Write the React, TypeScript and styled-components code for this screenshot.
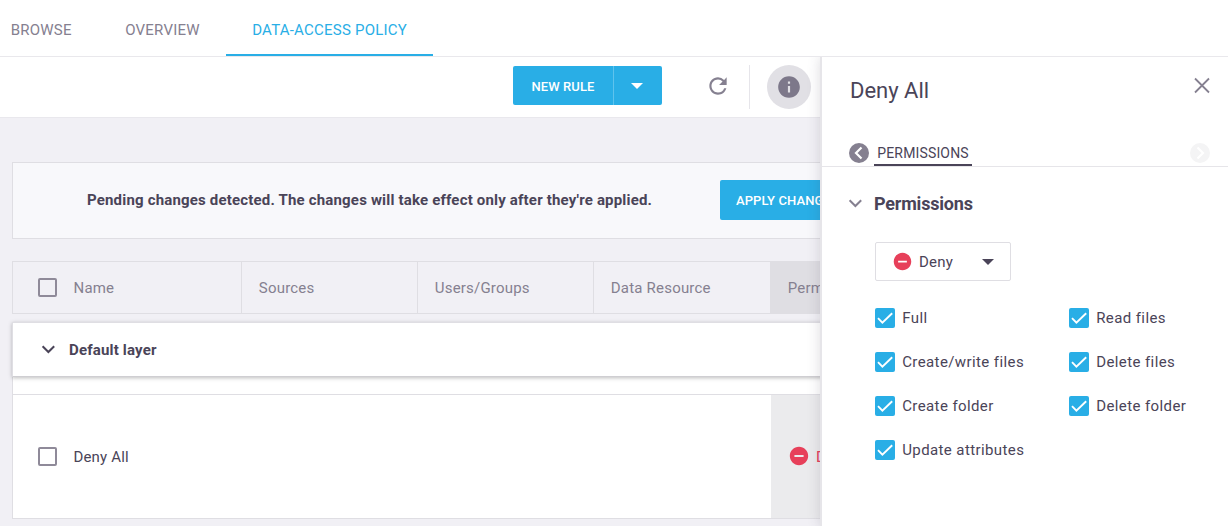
import React from "react";
import styled, { createGlobalStyle } from "styled-components";
import { MdInfo, MdRefresh, MdRemoveCircle } from "react-icons/md";

const ink = "#4a4458";
const muted = "#858090";
const blue = "#29aee6";
const red = "#e7405a";
const line = "#dfdee3";

const GlobalStyle = createGlobalStyle`
  *, *::before, *::after { box-sizing: border-box; }
  body { margin: 0; background: #fff; }
  svg { display: block; flex: none; }
  button { font: inherit; border: 0; padding: 0; background: none; color: inherit; }
`;

const Page = styled.div`
  width: 1228px;
  height: 526px;
  overflow: hidden;
  display: flex;
  flex-direction: column;
  font-family: Roboto, "Liberation Sans", sans-serif;
  font-size: 15px;
  letter-spacing: 0.4px;
  color: ${ink};
  white-space: nowrap;
`;

const NavBar = styled.nav`
  flex: none;
  height: 57px;
  display: flex;
  align-items: stretch;
  border-bottom: 1px solid #e9e8ec;
  background: #fff;
`;

const NavTab = styled.button<{ $width: number; $active?: boolean; $first?: boolean }>`
  width: ${(p) => p.$width}px;
  padding: 6px 0 0 ${(p) => (p.$first ? 10.7 : 26.2)}px;
  text-align: left;
  font-size: 15px;
  letter-spacing: 0.22px;
  color: ${(p) => (p.$active ? blue : muted)};
  border-bottom: 2px solid ${(p) => (p.$active ? blue : "transparent")};
`;

const Body = styled.div`
  flex: 1;
  min-height: 0;
  display: flex;
  overflow: hidden;
`;

const Main = styled.main`
  width: 820px;
  flex: none;
  overflow: hidden;
  display: flex;
  flex-direction: column;
  background: #f1f0f5;
`;

const Toolbar = styled.div`
  flex: none;
  height: 61px;
  display: flex;
  align-items: center;
  padding: 0 9px 1px 513px;
  background: #fff;
  border-bottom: 1px solid #e9e8ed;
`;

const SplitButton = styled.div`
  display: flex;
  width: 149px;
  height: 39px;
  margin-bottom: 2px;
  border-radius: 2px;
  background: ${blue};
  color: #fff;
`;

const SplitLabel = styled.button`
  width: 101px;
  padding-top: 2px;
  border-right: 1px solid #5fc3ed;
  font-size: 13px;
  font-weight: 500;
  letter-spacing: 0.1px;
`;

const SplitArrow = styled.button`
  flex: 1;
  display: flex;
  align-items: center;
  justify-content: center;
  padding-right: 2px;
`;

const RefreshButton = styled.button`
  margin: 0 0 2px 43px;
  color: ${muted};
`;

const Separator = styled.div`
  width: 1px;
  height: 44px;
  margin: 0 17px 0 18px;
  background: #e6e5ea;
`;

const InfoButton = styled.button`
  width: 44px;
  height: 44px;
  border-radius: 50%;
  background: #e1e0e5;
  color: #7d788a;
  display: flex;
  align-items: center;
  justify-content: center;
`;

const Content = styled.section`
  padding: 44px 0 0 12px;
`;

const Banner = styled.div`
  display: flex;
  align-items: center;
  height: 77px;
  padding: 0 0 2px 74px;
  width: 1000px;
  border: 1px solid ${line};
  background: #f8f8fb;
`;

const BannerText = styled.p`
  width: 633px;
  margin: 0;
  font-weight: 700;
  letter-spacing: 0.18px;
`;

const ApplyButton = styled.button`
  height: 40px;
  padding: 1px 16px 0;
  border-radius: 2px;
  background: ${blue};
  color: #fff;
  font-size: 13px;
  font-weight: 500;
  letter-spacing: 0.1px;
`;

const TableHead = styled.div`
  display: flex;
  width: 1000px;
  height: 53px;
  margin-top: 22px;
  border: 1px solid ${line};
  color: ${muted};
  letter-spacing: 0.2px;
`;

const HeadCell = styled.div<{ $width: number; $shaded?: boolean }>`
  width: ${(p) => p.$width}px;
  display: flex;
  align-items: center;
  padding-left: 16.8px;
  border-right: ${(p) => (p.$shaded ? 0 : 1)}px solid ${line};
  background: ${(p) => (p.$shaded ? "#dfdee3" : "transparent")};
`;

const CheckCell = styled(HeadCell)`
  padding-left: 25px;
  gap: 16.5px;
`;

const EmptyBox = styled.span`
  flex: none;
  width: 19px;
  height: 19px;
  border: 2px solid #8f8a99;
  border-radius: 2px;
`;

const GroupRow = styled.div`
  position: relative;
  display: flex;
  align-items: center;
  gap: 14px;
  width: 1000px;
  height: 55px;
  margin-top: 8px;
  padding-left: 28px;
  background: #fff;
  border: 1px solid ${line};
  border-bottom-color: #cfced2;
  box-shadow: 0 1px 4px rgba(0, 0, 0, 0.26);
  font-weight: 700;
  letter-spacing: 0.17px;
`;

const GroupSpacer = styled.div`
  width: 1000px;
  height: 17px;
  border-left: 1px solid ${line};
  background: #fff;
`;

const Row = styled.div`
  display: flex;
  width: 1000px;
  height: 125px;
  border: 1px solid ${line};
  background: #fff;
`;

const RowName = styled.div`
  width: 758px;
  display: flex;
  align-items: center;
  gap: 16px;
  padding: 0 0 1px 25.4px;
  letter-spacing: 0.2px;
`;

const RowLabel = styled.span`
  padding-top: 2px;
`;

const RowPermission = styled.div`
  flex: 1;
  display: flex;
  align-items: center;
  gap: 6.5px;
  padding: 0 0 1px 16.6px;
  background: #ebebed;
  color: ${red};
`;

const Panel = styled.aside`
  position: relative;
  flex: 1;
  display: flex;
  flex-direction: column;
  border-left: 2px solid #e6e5e9;
  background: #fff;
  box-shadow: 0 0 12px rgba(60, 55, 80, 0.18);
`;

const PanelHead = styled.header`
  display: flex;
  justify-content: space-between;
  align-items: flex-start;
  height: 83px;
  padding: 20px 18px 0 28px;
`;

const PanelTitle = styled.h1`
  margin: 0;
  font-size: 22px;
  line-height: 28px;
  font-weight: 400;
  letter-spacing: 0;
`;

const PanelTabs = styled.div`
  display: flex;
  align-items: center;
  height: 27px;
  padding: 0 18px 0 27px;
  border-bottom: 1px solid #e6e5e9;
`;

const PanelTab = styled.button`
  height: 26px;
  width: 98px;
  margin: 0 auto 0 5px;
  padding-top: 2px;
  font-size: 14px;
  letter-spacing: 0.15px;
  border-bottom: 2px solid ${ink};
`;

const SectionHead = styled.div`
  display: flex;
  align-items: center;
  gap: 12px;
  height: 22px;
  margin: 25px 0 0 26px;
`;

const SectionTitle = styled.h2`
  margin: 0;
  font-size: 18px;
  font-weight: 700;
  letter-spacing: -0.2px;
`;

const Select = styled.button`
  display: flex;
  align-items: center;
  width: 136px;
  height: 39px;
  margin: 28px 0 0 53px;
  padding: 0 16px 0 16px;
  border: 1px solid ${line};
  border-radius: 2px;
`;

const SelectLabel = styled.span`
  margin: 0 auto 0 6px;
  letter-spacing: 0.2px;
`;

const PermissionGrid = styled.div`
  display: grid;
  grid-template-columns: 194px 1fr;
  grid-auto-rows: 44px;
  margin: 15px 0 0 53px;
`;

const PermissionItem = styled.label`
  display: flex;
  align-items: center;
  gap: 7.2px;
`;

const CheckedIcon = () => (
  <svg width="20" height="20" viewBox="0 0 20 20">
    <rect width="20" height="20" rx="2" fill={blue} />
    <path d="M3 10.2 7.4 14.6 17.2 5.2" fill="none" stroke="#fff" strokeWidth="1.9" />
  </svg>
);

const Caret = ({ color }: { color: string }) => (
  <svg width="12" height="6" viewBox="0 0 12 6">
    <path d="M0 0h12L6 6z" fill={color} />
  </svg>
);

const Chevron = ({ color }: { color: string }) => (
  <svg width="14" height="9" viewBox="0 0 14 9">
    <path d="M1.6 1.2 7.4 7 13.2 1.2" fill="none" stroke={color} strokeWidth="2" />
  </svg>
);

const CircleArrow = ({ color, next }: { color: string; next?: boolean }) => (
  <svg width="20" height="20" viewBox="0 0 20 20">
    <circle cx="10" cy="10" r="10" fill={color} />
    <path d={next ? "M7.5 4.5 13 10 7.5 15.5" : "M12.5 4.5 7 10 12.5 15.5"} fill="none" stroke="#fff" strokeWidth="2.2" />
  </svg>
);

const permissions = [
  "Full",
  "Read files",
  "Create/write files",
  "Delete files",
  "Create folder",
  "Delete folder",
  "Update attributes",
];

export default function App() {
  return (
    <Page>
      <GlobalStyle />
      <NavBar>
        <NavTab $width={99} $first>BROWSE</NavTab>
        <NavTab $width={127}>OVERVIEW</NavTab>
        <NavTab $width={207} $active>DATA-ACCESS POLICY</NavTab>
      </NavBar>
      <Body>
        <Main>
          <Toolbar>
            <SplitButton>
              <SplitLabel>NEW RULE</SplitLabel>
              <SplitArrow><Caret color="#fff" /></SplitArrow>
            </SplitButton>
            <RefreshButton><MdRefresh size={26} /></RefreshButton>
            <Separator />
            <InfoButton><MdInfo size={26} /></InfoButton>
          </Toolbar>
          <Content>
            <Banner>
              <BannerText>
                Pending changes detected. The changes will take effect only after they're applied.
              </BannerText>
              <ApplyButton>APPLY CHANGES</ApplyButton>
            </Banner>
            <TableHead>
              <CheckCell $width={229}><EmptyBox />Name</CheckCell>
              <HeadCell $width={176}>Sources</HeadCell>
              <HeadCell $width={176}>Users/Groups</HeadCell>
              <HeadCell $width={177}>Data Resource</HeadCell>
              <HeadCell $width={240} $shaded>Permissions</HeadCell>
            </TableHead>
            <GroupRow><Chevron color={ink} />Default layer</GroupRow>
            <GroupSpacer />
            <Row>
              <RowName><EmptyBox /><RowLabel>Deny All</RowLabel></RowName>
              <RowPermission><MdRemoveCircle size={22} /><RowLabel>Deny</RowLabel></RowPermission>
            </Row>
          </Content>
        </Main>
        <Panel>
          <PanelHead>
            <PanelTitle>Deny All</PanelTitle>
            <svg width="16" height="17" viewBox="0 0 16 17">
              <path d="M1 1.5 15 15.5M15 1.5 1 15.5" stroke={muted} strokeWidth="1.8" />
            </svg>
          </PanelHead>
          <PanelTabs>
            <CircleArrow color={muted} />
            <PanelTab>PERMISSIONS</PanelTab>
            <CircleArrow color="#f4f4f5" next />
          </PanelTabs>
          <SectionHead>
            <Chevron color={muted} />
            <SectionTitle>Permissions</SectionTitle>
          </SectionHead>
          <Select>
            <MdRemoveCircle size={21} color={red} />
            <SelectLabel>Deny</SelectLabel>
            <Caret color={ink} />
          </Select>
          <PermissionGrid>
            {permissions.map((name) => (
              <PermissionItem key={name}><CheckedIcon />{name}</PermissionItem>
            ))}
          </PermissionGrid>
        </Panel>
      </Body>
    </Page>
  );
}
